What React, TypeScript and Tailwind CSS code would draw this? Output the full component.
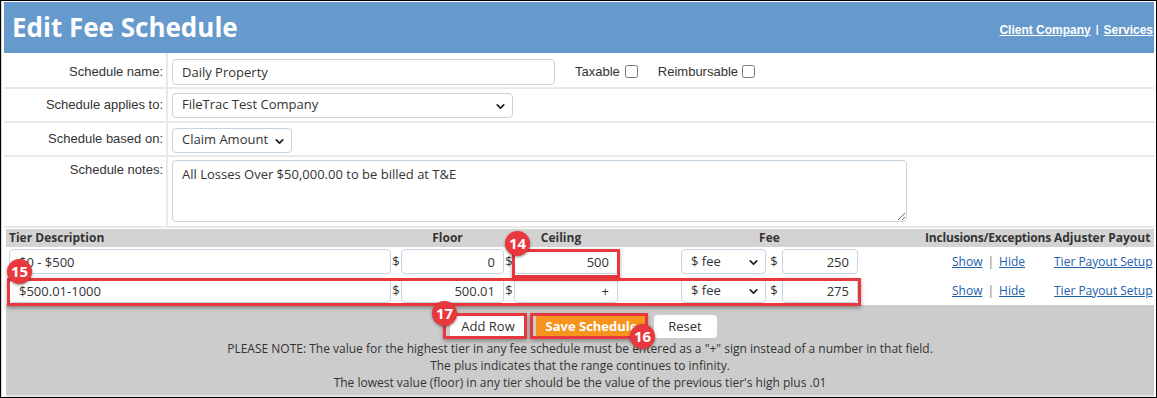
import { ChevronDown } from "lucide-react";

const os = "font-['Open_Sans',sans-serif]";
const inputCls =
  "h-[25px] rounded-[4px] border border-[#c5d3e1] bg-white text-[13px] text-[#333] outline-none";

function Select({ value, w }: { value: string; w: string }) {
  return (
    <div className={`relative ${w} h-[25px] rounded-[4px] border border-[#c5d3e1] bg-white flex items-center pl-[9px] text-[13px] text-[#333] ${os}`}>
      {value}
      <ChevronDown className="absolute right-[5px] top-[6px] text-[#222]" size={13} strokeWidth={3.2} />
    </div>
  );
}

function Badge({ n, x, y }: { n: number; x: number; y: number }) {
  return (
    <div
      className={`absolute w-[25px] h-[25px] rounded-full bg-[#e8383e] text-white text-[15px] font-bold flex items-center justify-center shadow-[0_1px_3px_rgba(0,0,0,0.45)] ${os}`}
      style={{ left: x - 13, top: y - 13 }}
    >
      {n}
    </div>
  );
}

function Box({ x, y, w, h }: { x: number; y: number; w: number; h: number }) {
  return (
    <div
      className="absolute border-[3px] border-[#e8383e] shadow-[0_2px_4px_rgba(0,0,0,0.35)]"
      style={{ left: x - 1, top: y - 1, width: w, height: h }}
    />
  );
}

function FormRow({
  label,
  children,
  h,
  labelCls,
  cellCls,
}: {
  label: string;
  children: React.ReactNode;
  h: string;
  labelCls: string;
  cellCls: string;
}) {
  return (
    <div className={`flex ${h} border-b-2 border-[#e9e9e9]`}>
      <div className={`w-[164px] flex justify-end pr-[3px] border-r-2 border-[#e9e9e9] text-[13px] text-[#333] ${labelCls}`}>
        {label}
      </div>
      <div className={`flex-1 flex pl-[4px] ${cellCls}`}>{children}</div>
    </div>
  );
}

type Tier = { desc: string; floor: string; ceil: string; fee: string };

const tiers: Tier[] = [
  { desc: "$0 - $500", floor: "0", ceil: "500", fee: "250" },
  { desc: "$500.01-1000", floor: "500.01", ceil: "+", fee: "275" },
];

function TierRow({ t }: { t: Tier }) {
  return (
    <div className={`flex items-center h-[29px] bg-white pl-[3px] text-[13px] text-[#333] ${os}`}>
      <div className="w-[382px]">
        <input readOnly value={t.desc} className={`${inputCls} w-full pl-[9px] ${os}`} />
      </div>
      <div className="w-[113px] flex items-center">
        <span className="w-[10px] text-center">$</span>
        <input readOnly value={t.floor} className={`${inputCls} w-[103px] text-right pr-[8px] ${os}`} />
      </div>
      <div className="w-[114px] flex items-center">
        <span className="w-[10px] text-center">$</span>
        <input readOnly value={t.ceil} className={`${inputCls} w-[104px] text-right pr-[8px] ${os}`} />
      </div>
      <div className="w-[63px]" />
      <div className="w-[177px] flex items-center">
        <Select value="$ fee" w="w-[85px]" />
        <span className="w-[16px] text-center">$</span>
        <input readOnly value={t.fee} className={`${inputCls} w-[76px] text-right pr-[8px] ${os}`} />
      </div>
      <div className="w-[64px]" />
      <div className="w-[129px] text-center text-[12px] pl-[4px]">
        <a className="text-[#2160ad] underline">Show</a>
        <span className="text-[#777] mx-[5px]">|</span>
        <a className="text-[#2160ad] underline">Hide</a>
      </div>
      <div className="w-[102px] pl-[3px] text-[12px]">
        <a className="text-[#2160ad] underline whitespace-nowrap">Tier Payout Setup</a>
      </div>
    </div>
  );
}

export default function App() {
  return (
    <div className="relative w-[1157px] h-[398px] border border-black bg-white overflow-hidden font-['Liberation_Sans',Arial,sans-serif]">
      <div className="h-full flex flex-col pt-[1px] pl-[2px] pr-[2px] border-l border-[#d8d8d8]">
        <div className="h-[51px] bg-[#6699cc] flex items-center justify-between pl-[8px] pr-[1px]">
          <h1 className={`text-[26px] font-bold text-white ${os}`}>Edit Fee Schedule</h1>
          <div className="text-[12px] font-bold text-white flex items-center gap-[5px] mt-[4px]">
            <a className="underline">Client Company</a>
            <span className="text-[10px]">|</span>
            <a className="underline">Services</a>
          </div>
        </div>

        <FormRow label="Schedule name:" h="h-[36px]" labelCls="items-center pt-[3px]" cellCls="items-center pt-[3px]">
          <input readOnly value="Daily Property" className={`${inputCls} h-[26px] w-[383px] pl-[9px] ${os}`} />
          <label className="ml-[20px] flex items-center text-[13px] text-[#333]">
            Taxable
            <input type="checkbox" className="ml-[5px] w-[13px] h-[13px]" />
          </label>
          <label className="ml-[20px] flex items-center text-[13px] text-[#333]">
            Reimbursable
            <input type="checkbox" className="ml-[4px] w-[13px] h-[13px]" />
          </label>
        </FormRow>
        <FormRow label="Schedule applies to:" h="h-[34px]" labelCls="items-center" cellCls="items-center">
          <Select value="FileTrac Test Company" w="w-[341px]" />
        </FormRow>
        <FormRow label="Schedule based on:" h="h-[34px]" labelCls="items-center" cellCls="items-center">
          <div className="mt-[2px]">
            <Select value="Claim Amount" w="w-[120px]" />
          </div>
        </FormRow>
        <FormRow label="Schedule notes:" h="h-[71px]" labelCls="pt-[3px]" cellCls="pt-[3px]">
          <textarea
            readOnly
            value="All Losses Over $50,000.00 to be billed at T&E"
            className={`w-[735px] h-[62px] rounded-[4px] border border-[#c5d3e1] px-[9px] py-[4px] text-[13px] text-[#333] outline-none ${os}`}
          />
        </FormRow>

        <div className="flex-1 flex flex-col ml-[2px] mt-[1px] bg-[#cccccc] border-b-2 border-[#e2e2e2]">
          <div className={`flex items-center h-[18px] bg-[#d3d3d3] pl-[3px] text-[12px] font-bold text-[#333] ${os}`}>
            <div className="w-[382px]">Tier Description</div>
            <div className="w-[113px] text-center">Floor</div>
            <div className="w-[114px] text-center">Ceiling</div>
            <div className="w-[63px]" />
            <div className="w-[177px] text-center">Fee</div>
            <div className="w-[64px]" />
            <div className="w-[129px] text-right whitespace-nowrap tracking-[-0.2px]">Inclusions/Exceptions</div>
            <div className="w-[102px] pl-[3px] whitespace-nowrap">Adjuster Payout</div>
          </div>
          {tiers.map((t) => (
            <TierRow key={t.desc} t={t} />
          ))}
          <div className={`flex flex-col items-center pt-[10px] text-[12px] text-[#333] ${os}`}>
            <div className="flex items-center gap-[8px] ml-[6px]">
              <button className="h-[23px] px-[10px] w-[77px] bg-white rounded-[3px] text-[13px] text-[#333]">Add Row</button>
              <button className="h-[23px] w-[112px] bg-[#f7941d] rounded-[3px] text-[13px] font-bold text-white ml-[1px]">Save Schedule</button>
              <button className="h-[23px] w-[63px] bg-white rounded-[4px] text-[13px] text-[#333] ml-[-2px]">Reset</button>
            </div>
            <div className="mt-[2px] leading-[17px] text-center">
              <p>PLEASE NOTE: The value for the highest tier in any fee schedule must be entered as a "+" sign instead of a number in that field.</p>
              <p>The plus indicates that the range continues to infinity.</p>
              <p>The lowest value (floor) in any tier should be the value of the previous tier's high plus .01</p>
            </div>
          </div>
        </div>
      </div>

      <Box x={512} y={249} w={108} h={29} />
      <Box x={7} y={278} w={854} h={28} />
      <Box x={443} y={313} w={84} h={26} />
      <Box x={530} y={313} w={118} h={26} />
      <Badge n={14} x={517} y={243} />
      <Badge n={15} x={19} y={271} />
      <Badge n={17} x={444} y={313} />
      <Badge n={16} x={642} y={336} />
    </div>
  );
}
